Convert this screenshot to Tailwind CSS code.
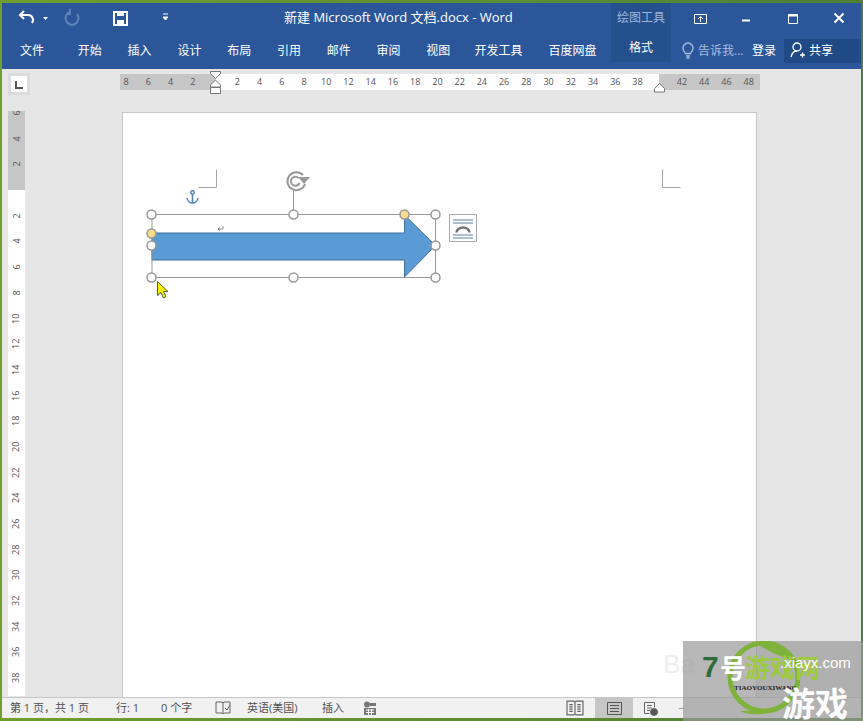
<!DOCTYPE html>
<html lang="zh-CN">
<head>
<meta charset="UTF-8">
<title>新建 Microsoft Word 文档.docx - Word</title>
<script src="https://cdn.jsdelivr.net/npm/@tailwindcss/browser@4"></script>
</head>
<body class="relative w-[863px] h-[721px] overflow-hidden bg-gradient-to-r from-[#6f9f2c] to-[#4f7f35] font-['Open_Sans','Noto_Sans_CJK_SC',sans-serif] text-[12px] text-[#444]">
  <div class="absolute left-[2px] top-[3px] w-[859px] h-[715px] flex flex-col bg-[#e6e6e6]">

    <!-- title + tabs -->
    <header class="h-[66px] flex bg-[#2b579a] text-white shrink-0">
      <div class="w-[609px] flex flex-col">
        <div class="h-[30px] flex items-center">
          <svg class="w-[170px] h-[30px] shrink-0" viewBox="2 3 170 30" fill="none" stroke="#fff">
            <path d="M24 11l-4 4 4 4" stroke-width="2"/><path d="M20 15h8a5 5 0 0 1 4 8" stroke-width="2"/>
            <path d="M43 17h5l-2.500 3z" fill="#fff" stroke="none"/>
            <path d="M70 12a6.500 6.500 0 1 0 7 2M70 9v5h-3" stroke="#5f83b8" stroke-width="2"/>
            <path d="M114 12h13v13h-13z" stroke-width="2"/><path d="M117 11h7v5h-7zM117 20h7v5h-7z" fill="#fff" stroke="none"/>
            <path d="M163 14h5M163 17h5l-2.500 3z" fill="#fff" stroke-width="1"/>
          </svg>
          <div class="ml-[112px] text-[13px] whitespace-nowrap">新建 Microsoft Word 文档.docx - Word</div>
        </div>
        <nav class="h-[36px] flex items-center text-[12px]">
          <span class="w-[63px] pr-[3px] text-center">文件</span>
          <span class="w-[49.8px] text-center">开始</span>
          <span class="w-[49.8px] text-center">插入</span>
          <span class="w-[49.8px] text-center">设计</span>
          <span class="w-[49.8px] text-center">布局</span>
          <span class="w-[49.8px] text-center">引用</span>
          <span class="w-[49.8px] text-center">邮件</span>
          <span class="w-[49.8px] text-center">审阅</span>
          <span class="w-[49.8px] text-center">视图</span>
          <span class="w-[71px] text-center">开发工具</span>
          <span class="w-[77px] text-center">百度网盘</span>
        </nav>
      </div>
      <div class="w-[60px] h-[59px] flex flex-col items-center bg-[#24508c]">
        <span class="h-[30px] flex items-center text-[#9db7dc]">绘图工具</span>
        <span class="h-[29px] flex items-center">格式</span>
      </div>
      <div class="w-[190px] flex flex-col">
        <div class="h-[30px] relative">
          <svg class="w-[190px] h-[30px]" viewBox="671 3 190 30" fill="none" stroke="#fff">
            <path d="M694.500 14.500h12v9h-12z"/><path d="M700.500 22v-5M698 19l2.500-2.500 2.500 2.500"/>
            <path d="M742 20.500h8" stroke-width="2"/>
            <path d="M788.500 14.500h9v9h-9z"/><path d="M788 15.500h10" stroke-width="2"/>
            <path d="M834.500 13.500l9 9M843.500 13.500l-9 9" stroke-width="2"/>
          </svg>
        </div>
        <div class="h-[36px] flex items-center">
          <svg class="w-[14px] h-[18px] ml-[10px] shrink-0" viewBox="0 0 14 18" fill="none" stroke="#a9bfdf" stroke-width="1.300"><path d="M4.500 11.500C3.500 9.500 2 9 2 6a5 5 0 0 1 10 0c0 3-1.500 3.500-2.500 5.500z"/><path d="M5 14h4M5.500 16h3"/></svg>
          <span class="ml-[3px] w-[42px] text-[#a9bfdf] whitespace-nowrap">告诉我...</span>
          <span class="ml-[12px] w-[34px] whitespace-nowrap">登录</span>
          <div class="ml-[-2px] flex-1 h-[24px] -mt-[1px] bg-[#1f4a85] flex items-center">
            <svg class="w-[16px] h-[17px] ml-[6px] shrink-0" viewBox="0 0 16 17" fill="none" stroke="#fff" stroke-width="1.300"><circle cx="7" cy="5" r="4"/><path d="M1 15c1-4 3-6 6-6M10 13h5M12.500 10.500v5"/></svg>
            <span class="ml-[3px]">共享</span>
          </div>
        </div>
      </div>
    </header>

    <!-- horizontal ruler -->
    <div class="h-[43px] flex shrink-0">
      <div class="ml-[6px] mt-[4px] w-[22px] h-[22px] bg-white border-[3px] border-[#dcdcdc] flex items-end justify-center pb-[3px]">
        <div class="w-[8px] h-[8px] border-l-2 border-b-2 border-[#555]"></div>
      </div>
      <div class="relative ml-[90px] mt-[5px] w-[640px] h-[16px] flex text-[9px] leading-[16px] text-center text-[#555] bg-[linear-gradient(to_right,#c6c6c6_96px,#fff_96px,#fff_539px,#c6c6c6_539px)]">
        <span class="w-[22.440px] -ml-[5px]">8</span><span class="w-[22.440px]">6</span><span class="w-[22.440px]">4</span><span class="w-[22.440px]">2</span>
        <span class="w-[22.440px]"></span>
        <span class="w-[22.440px]">2</span><span class="w-[22.440px]">4</span><span class="w-[22.440px]">6</span><span class="w-[22.440px]">8</span><span class="w-[22.440px]">10</span><span class="w-[22.440px]">12</span><span class="w-[22.440px]">14</span><span class="w-[22.440px]">16</span><span class="w-[22.440px]">18</span><span class="w-[22.440px]">20</span><span class="w-[22.440px]">22</span><span class="w-[22.440px]">24</span><span class="w-[22.440px]">26</span><span class="w-[22.440px]">28</span><span class="w-[22.440px]">30</span><span class="w-[22.440px]">32</span><span class="w-[22.440px]">34</span><span class="w-[22.440px]">36</span><span class="w-[22.440px]">38</span>
        <span class="w-[22.440px]"></span>
        <span class="w-[22.440px]">42</span><span class="w-[22.440px]">44</span><span class="w-[22.440px]">46</span><span class="w-[22.440px]">48</span>
        <!-- indent markers -->
        <svg class="absolute left-[89px] -top-[3px] w-[14px] h-[28px]" viewBox="0 0 14 28" fill="#fff" stroke="#777"><path d="M1.500 .5h10v2l-5 5-5-5zM6.500 9l5 5v2h-10v-2zM1.500 16.500h10v6h-10z"/></svg>
        <svg class="absolute left-[533px] top-[9px] w-[13px] h-[10px]" viewBox="0 0 13 10" fill="#fff" stroke="#777"><path d="M1.500 9v-3.500l5-5 5 5v3.500z"/></svg>
      </div>
    </div>

    <!-- vertical ruler + page -->
    <div class="flex-1 flex min-h-0">
      <div class="ml-[6px] w-[17px] h-[585px] -mt-[1px] flex flex-col items-center text-[9px] text-[#555] bg-[linear-gradient(to_bottom,#c6c6c6_79px,#fff_79px)]">
        <span class="h-[25.700px] -mt-[11px] flex items-center rotate-[-90deg]">6</span>
        <span class="h-[25.700px] flex items-center rotate-[-90deg]">4</span>
        <span class="h-[25.700px] flex items-center rotate-[-90deg]">2</span>
        <span class="h-[25.700px]"></span>
        <span class="h-[25.700px] flex items-center rotate-[-90deg]">2</span>
        <span class="h-[25.700px] flex items-center rotate-[-90deg]">4</span>
        <span class="h-[25.700px] flex items-center rotate-[-90deg]">6</span>
        <span class="h-[25.700px] flex items-center rotate-[-90deg]">8</span>
        <span class="h-[25.700px] flex items-center rotate-[-90deg]">10</span>
        <span class="h-[25.700px] flex items-center rotate-[-90deg]">12</span>
        <span class="h-[25.700px] flex items-center rotate-[-90deg]">14</span>
        <span class="h-[25.700px] flex items-center rotate-[-90deg]">16</span>
        <span class="h-[25.700px] flex items-center rotate-[-90deg]">18</span>
        <span class="h-[25.700px] flex items-center rotate-[-90deg]">20</span>
        <span class="h-[25.700px] flex items-center rotate-[-90deg]">22</span>
        <span class="h-[25.700px] flex items-center rotate-[-90deg]">24</span>
        <span class="h-[25.700px] flex items-center rotate-[-90deg]">26</span>
        <span class="h-[25.700px] flex items-center rotate-[-90deg]">28</span>
        <span class="h-[25.700px] flex items-center rotate-[-90deg]">30</span>
        <span class="h-[25.700px] flex items-center rotate-[-90deg]">32</span>
        <span class="h-[25.700px] flex items-center rotate-[-90deg]">34</span>
        <span class="h-[25.700px] flex items-center rotate-[-90deg]">36</span>
        <span class="h-[25.700px] flex items-center rotate-[-90deg]">38</span>
      </div>
      <main class="relative ml-[97px] w-[635px] bg-white border-l border-t border-r border-[#c6c6c6]">
        <svg class="absolute -left-px -top-px w-[635px] h-[585px]" viewBox="122 112 635 585" fill="none">
          <path d="M198.500 187.500h18v-18M662.500 169.500v18h18" stroke="#a6a6a6"/>
          <!-- anchor -->
          <g stroke="#4f81bd" stroke-width="1.500"><circle cx="192.500" cy="192.500" r="1.700"/><path d="M192.500 194v9M187 198c.5 3 3 5 5.500 5s5-2 5.500-5"/></g>
          <!-- rotate handle -->
          <path d="M293.500 191v23" stroke="#999"/>
          <path d="M303 175a9 9 0 1 0 2 9M298.500 178a4.500 4.500 0 1 0 1 5" stroke="#999" stroke-width="2"/>
          <path d="M298 177h12l-6 7z" fill="#999"/>
          <!-- shape -->
          <path d="M152 233h252.500v-18l31 30.500-31 31.500v-17h-252.500z" fill="#5b9bd5" stroke="#41719c"/>
          <path d="M152 214.500h283.500v63h-283.500z" stroke="#999"/>
          <path d="M223 226v3h-5M220 227.500l-2 1.500 2 1.500" stroke="#777" stroke-width=".8"/>
          <g fill="#fff" stroke="#999" stroke-width="1.500">
            <circle cx="151.500" cy="214.500" r="4.500"/><circle cx="293.500" cy="214.500" r="4.500"/><circle cx="435.500" cy="214.500" r="4.500"/>
            <circle cx="151.500" cy="245.500" r="4.500"/><circle cx="435.500" cy="245.500" r="4.500"/>
            <circle cx="151.500" cy="277.500" r="4.500"/><circle cx="293.500" cy="277.500" r="4.500"/><circle cx="435.500" cy="277.500" r="4.500"/>
            <circle cx="404.500" cy="214.500" r="4.500" fill="#fbdc8c"/><circle cx="151.500" cy="233.500" r="4.500" fill="#fbdc8c"/>
          </g>
          <!-- cursor -->
          <path d="M157.500 281.500v14l3.500-3 2.500 5.500 2.500-1.500-2.500-5h4.500z" fill="#f4f000" stroke="#333" stroke-width=".8"/>
          <!-- layout options -->
          <path d="M449.500 214.500h27v27h-27z" fill="#fff" stroke="#aaa"/>
          <path d="M453 220h20M453 223h20M453 235h20M453 238h20" stroke="#5b7ea6"/>
          <path d="M456.500 232.500a6.500 5 0 0 1 13 0" stroke="#777" stroke-width="2.500"/>
        </svg>
      </main>
    </div>

    <!-- status bar -->
    <footer class="h-[21px] shrink-0 flex items-center bg-[#f1f1f1] border-t border-[#c6c6c6] text-[11px] text-[#505050] whitespace-nowrap">
      <span class="ml-[8px] w-[90px]">第 1 页，共 1 页</span>
      <span class="ml-[16px] w-[25px]">行: 1</span>
      <span class="ml-[20px] w-[36px]">0 个字</span>
      <svg class="ml-[18px] w-[16px] h-[16px]" viewBox="0 0 16 16" fill="none" stroke="#666"><path d="M1 2h6l1 1 1-1h6v11h-6l-1 1-1-1h-6zM8 3v11M10 8l2 2 3-5"/></svg>
      <span class="ml-[16px] w-[56px]">英语(美国)</span>
      <span class="ml-[19px] w-[25px]">插入</span>
      <svg class="ml-[16px] w-[14px] h-[14px]" viewBox="0 0 14 14" fill="#777"><circle cx="4" cy="3.500" r="3"/><path d="M7 2h6v3h-6zM1 7h12v7h-12z"/><path d="M3 9h8M3 11.500h8M5.500 8v6M8.500 8v6" stroke="#fff"/></svg>
      <svg class="ml-[187px] w-[22px] h-[16px]" viewBox="0 0 16 14" fill="none" stroke="#666"><path d="M1 1h6l1 1 1-1h6v12h-6l-1-1-1 1h-6zM8 2v10M3 4h3M3 6h3M3 8h3M3 10h3M10 4h3M10 6h3M10 8h3M10 10h3"/></svg>
      <div class="ml-[9px] w-[38px] h-full bg-[#c6c6c6] flex items-center justify-center">
        <svg class="w-[15px] h-[13px]" viewBox="0 0 15 13" fill="none" stroke="#555"><path d="M.5.5h14v12h-14zM3 3.500h9M3 6.500h9M3 9.500h9"/></svg>
      </div>
      <svg class="ml-[10px] w-[15px] h-[15px]" viewBox="0 0 15 15" fill="none" stroke="#666"><path d="M1.500 1.500h10v5M1.500 1.500v11h5M4 4.500h5M4 7h5M4 9.500h3"/><circle cx="11" cy="11" r="3.500" fill="#555"/></svg>
      <span class="ml-[20px] text-[#888]">−</span>
    </footer>
  </div>

  <!-- faint source mark under the game-site stamp -->
  <div class="absolute left-[663px] top-[651px] text-[26px] leading-none text-[#eee] font-['Liberation_Sans',sans-serif]">Ba</div>

  <!-- game-site stamp -->
  <div class="absolute left-[683px] top-[641px] w-[180px] h-[80px] bg-[#999]/70 overflow-hidden">
    <svg class="absolute left-[22px] top-[0px] w-[100px] h-[80px]" viewBox="0 0 100 80" fill="none">
      <circle cx="59" cy="36" r="34" stroke="#7fb23a" stroke-width="5"/>
      <path d="M50 2c14-3 30 3 38 18l-20-8z" fill="#7fb23a"/>
      <path d="M35 70c12 6 34 4 45-7l-22 6z" fill="#7fb23a"/>
    </svg>
    <span class="absolute left-[19px] top-[11px] text-[30px] leading-none font-bold text-[#2f6b3a] font-['Liberation_Sans','Noto_Sans_CJK_SC',sans-serif]">7</span>
    <span class="absolute left-[37px] top-[14px] text-[26px] leading-none font-bold text-white">号</span>
    <span class="absolute left-[62px] top-[14px] text-[25px] leading-none font-bold text-[#9ccb3b] whitespace-nowrap">游戏网</span>
    <span class="absolute left-[97px] top-[14px] text-[15px] leading-none text-white whitespace-nowrap font-['Liberation_Sans',sans-serif]">.xiayx.com</span>
    <span class="absolute left-[51px] top-[44px] text-[7px] leading-none font-bold text-[#222] whitespace-nowrap font-['Liberation_Serif',serif]">TIAOYOUXIWANG</span>
    <span class="absolute left-[99px] top-[46px] text-[33px] leading-none font-bold text-white whitespace-nowrap">游戏</span>
  </div>
</body>
</html>
